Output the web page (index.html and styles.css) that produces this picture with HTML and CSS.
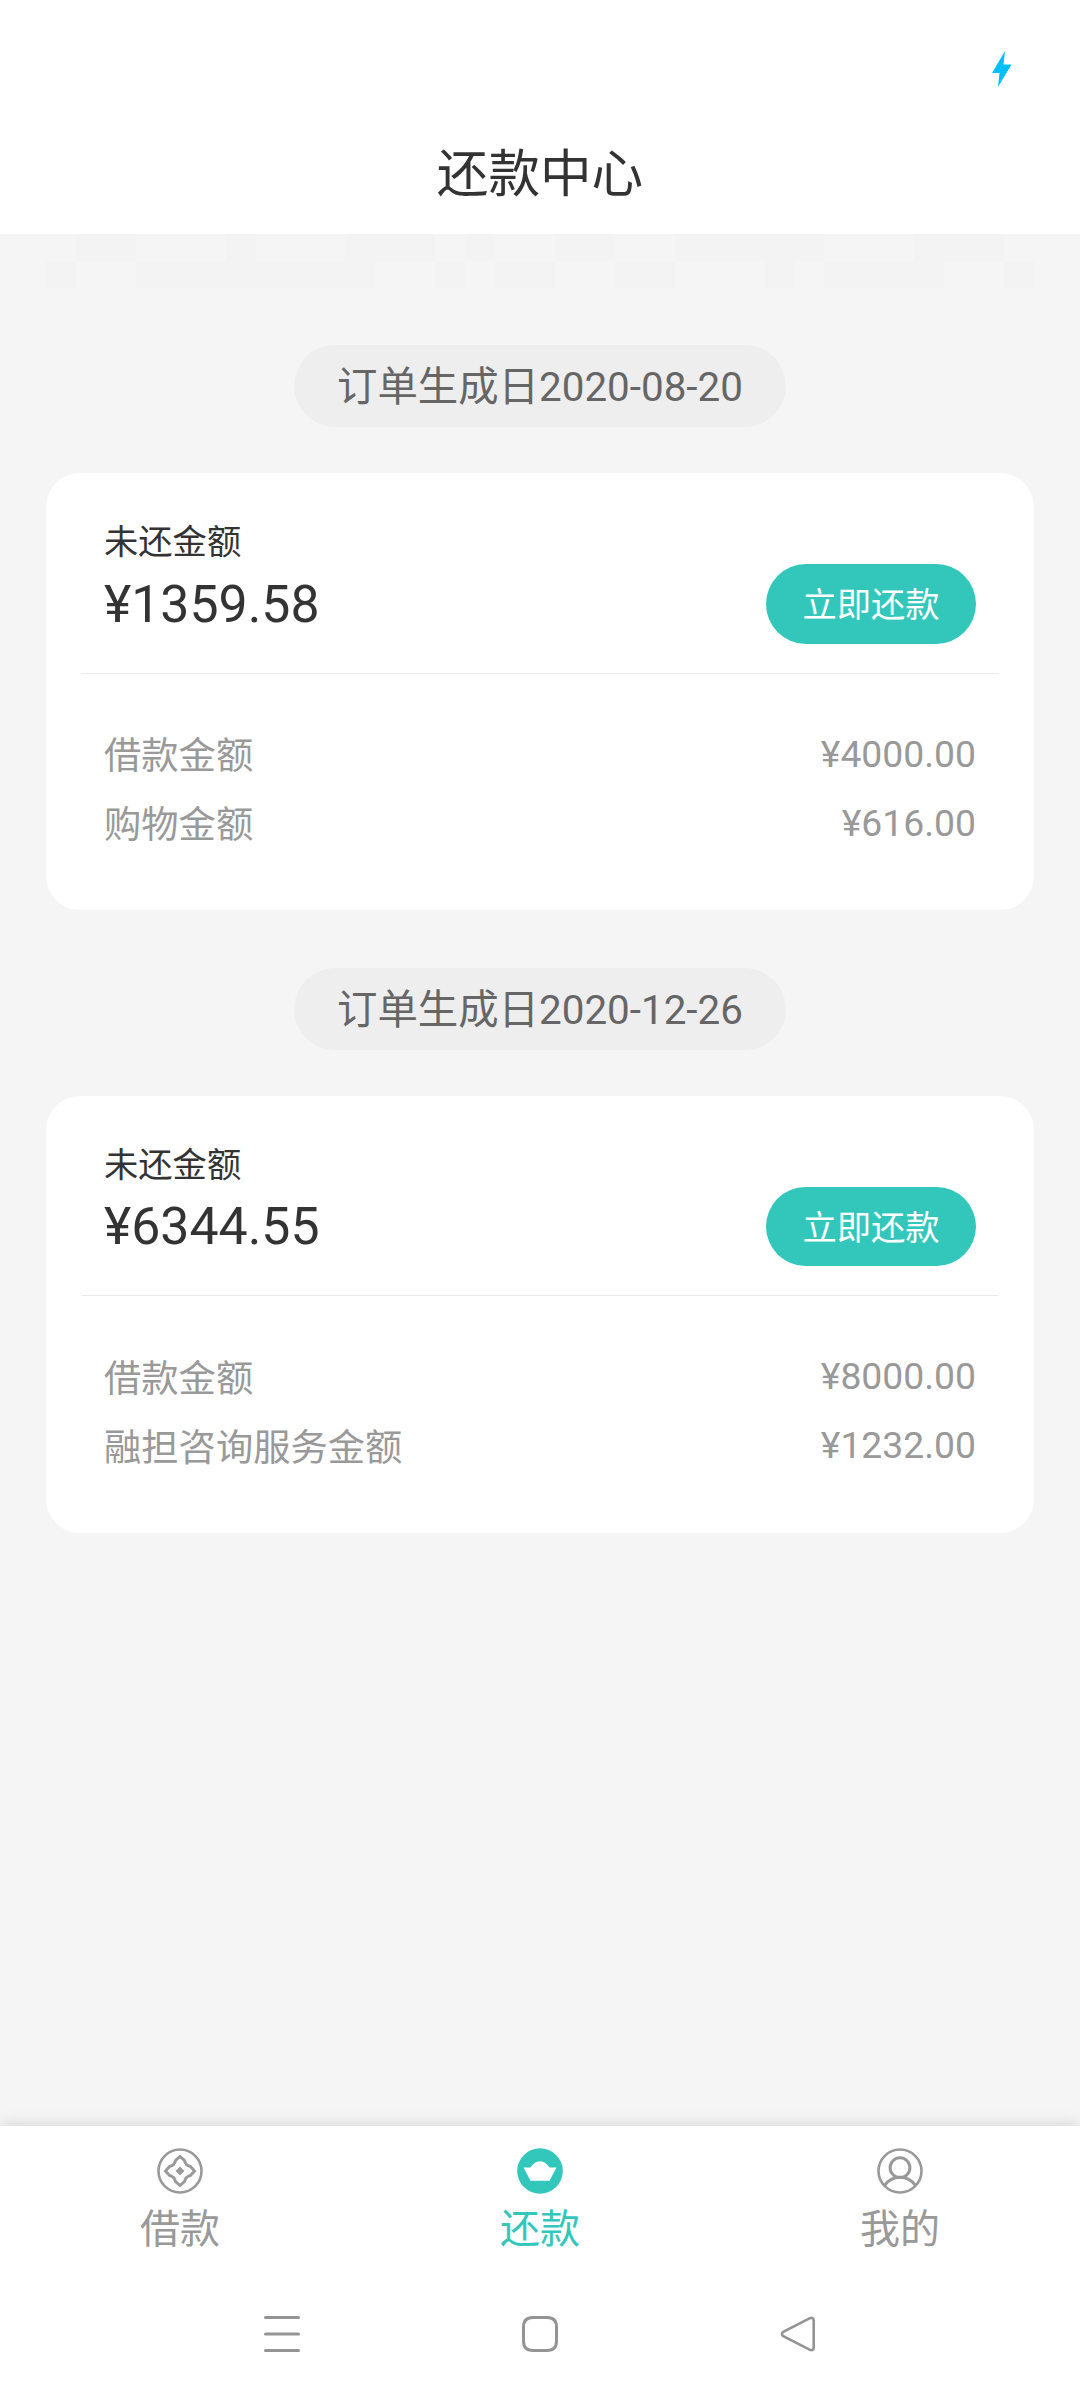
FILE: index.html
```html
<!DOCTYPE html>
<html lang="zh-CN">
<head>
<meta charset="utf-8">
<title>还款中心</title>
<link rel="stylesheet" href="styles.css">
</head>
<body>
<div class="app">
  <header class="header">
    <div class="status">
      <svg class="bolt" width="20" height="36" viewBox="0 0 20 36"><path d="M13 0L0 22H7.500L6 36L19.500 13.500H11.500Z" fill="#00bfff"/></svg>
    </div>
    <h1 class="title">还款中心</h1>
  </header>

  <main class="content">
    <svg class="mosaic" width="988" height="54" viewBox="0 0 33 2" preserveAspectRatio="none" shape-rendering="crispEdges">
      <path fill="#f3f3f3" d="M1 0h2v1h-2zM6 0h1v1h-1zM10 0h3v1h-3zM14 0h1v1h-1zM17 0h2v1h-2zM21 0h5v1h-5zM29 0h3v1h-3zM0 1h1v1h-1zM3 1h8v1h-8zM13 1h1v1h-1zM15 1h2v1h-2zM19 1h2v1h-2zM24 1h1v1h-1zM26 1h4v1h-4zM32 1h1v1h-1z"/>
    </svg>

    <section class="order">
      <div class="date">订单生成日2020-08-20</div>
      <div class="card">
        <div class="summary">
          <div class="due">
            <div class="due-label">未还金额</div>
            <div class="due-amount">¥1359.58</div>
          </div>
          <button class="pay">立即还款</button>
        </div>
        <div class="details">
          <div class="row"><span class="label">借款金额</span><span class="value">¥4000.00</span></div>
          <div class="row"><span class="label">购物金额</span><span class="value">¥616.00</span></div>
        </div>
      </div>
    </section>

    <section class="order">
      <div class="date">订单生成日2020-12-26</div>
      <div class="card">
        <div class="summary">
          <div class="due">
            <div class="due-label">未还金额</div>
            <div class="due-amount">¥6344.55</div>
          </div>
          <button class="pay">立即还款</button>
        </div>
        <div class="details">
          <div class="row"><span class="label">借款金额</span><span class="value">¥8000.00</span></div>
          <div class="row"><span class="label">融担咨询服务金额</span><span class="value">¥1232.00</span></div>
        </div>
      </div>
    </section>
  </main>

  <nav class="tabs">
    <a class="tab">
      <svg width="46" height="46" viewBox="0 0 46 46" fill="none" stroke="#999"><circle cx="23" cy="23" r="21.500" stroke-width="2.600"/><path d="M23 8.500L27.500 12.500Q28.500 17.500 33.500 18.500L37.500 23L33.500 27.500Q28.500 28.500 27.500 33.500L23 37.500L18.500 33.500Q17.500 28.500 12.500 27.500L8.500 23L12.500 18.500Q17.500 17.500 18.500 12.500Z" stroke-width="3"/><path d="M23 18.500L27.500 23L23 27.500L18.500 23Z" fill="#999" stroke="none"/></svg>
      <span>借款</span>
    </a>
    <a class="tab active">
      <svg width="46" height="46" viewBox="0 0 46 46"><circle cx="23" cy="23" r="22.800" fill="#33c7bb"/><path d="M6.500 19.500H13.500C16 15.500 19 13.200 23 13.200S30 15.500 32.500 19.500H39.500L32.500 32.700H13.500Z" fill="#fff"/></svg>
      <span>还款</span>
    </a>
    <a class="tab">
      <svg width="46" height="46" viewBox="0 0 46 46" fill="none" stroke="#999"><circle cx="23" cy="23" r="21.500" stroke-width="2.600"/><circle cx="23" cy="19.700" r="9.900" stroke-width="3"/><path d="M7.500 37.500C11.500 32 17 29.300 23 29.300S34.500 32 38.500 37.500" stroke-width="3"/></svg>
      <span>我的</span>
    </a>
  </nav>

  <footer class="sysnav">
    <svg width="36" height="36" viewBox="0 0 36 36" fill="none" stroke="#949494" stroke-width="3" stroke-linecap="round"><path d="M1.500 1.500H34.500M1.500 18H34.500M1.500 34.500H34.500"/></svg>
    <svg width="36" height="36" viewBox="0 0 36 36" fill="none" stroke="#949494" stroke-width="3"><path d="M11 1.500H25Q34.500 1.500 34.500 11V25Q34.500 34.500 25 34.500H11Q1.500 34.500 1.500 25V11Q1.500 1.500 11 1.500Z"/></svg>
    <svg width="36" height="36" viewBox="0 0 36 36" fill="none" stroke="#949494" stroke-width="2.600"><path d="M29.500 2.400L3.300 15.800Q0.500 18 3.300 20.200L29.500 33.600Q33.700 35.200 33.700 31.500V4.500Q33.700 0.800 29.500 2.400Z"/></svg>
  </footer>
</div>
</body>
</html>
```
FILE: styles.css
```css
* { box-sizing: border-box; }

body {
  margin: 0;
  background: #f5f5f5;
  color: #333;
  font-family: Roboto, "Noto Sans CJK SC", sans-serif;
}

svg { display: block; }

.app {
  width: 1080px;
  height: 2400px;
  display: flex;
  flex-direction: column;
  overflow: hidden;
}

.header {
  height: 234px;
  background: #fff;
}

.status {
  height: 137px;
  padding: 51px 68px 0 0;
  display: flex;
  justify-content: flex-end;
}

.title {
  margin: 0;
  font-size: 51.6px;
  font-weight: 400;
  line-height: 75px;
  text-align: center;
}

.content {
  flex: 1;
  padding: 0 46px;
  display: flex;
  flex-direction: column;
}

.mosaic { margin-bottom: 57px; }

.order {
  display: flex;
  flex-direction: column;
  align-items: center;
  margin-bottom: 58px;
}

.date {
  width: 492px;
  height: 82px;
  border-radius: 41px;
  background: #eee;
  color: #666;
  font-size: 40.4px;
  line-height: 86px;
  text-align: center;
}

.card {
  width: 988px;
  height: 437px;
  margin-top: 46px;
  padding: 0 35px;
  border-radius: 34px;
  background: #fff;
}

.summary {
  height: 201px;
  padding: 46px 23px 0;
  border-bottom: 1px solid #ebebeb;
  display: flex;
  justify-content: space-between;
}

.due-label {
  font-size: 34.3px;
  line-height: 46px;
}

.due-amount {
  font-size: 51.8px;
  line-height: 79px;
}

.pay {
  width: 210px;
  height: 80px;
  margin-top: 45px;
  padding: 2px 0 0;
  border: 0;
  border-radius: 40px;
  background: #33c7bb;
  color: #fff;
  font: inherit;
  font-size: 34.3px;
  line-height: 78px;
}

.details {
  padding: 46px 23px 0;
  color: #999;
  font-size: 37.3px;
}

.row {
  height: 69px;
  line-height: 69px;
  display: flex;
  justify-content: space-between;
}

.label { line-height: 73px; }

.order + .order .summary { height: 200px; }
.order + .order .due-amount { line-height: 77px; }
.order + .order .pay { height: 79px; }
.order + .order .label { line-height: 75px; }

.tabs {
  height: 144px;
  padding-top: 22px;
  background: #fff;
  box-shadow: 0 0 16px rgba(0, 0, 0, 0.16);
  display: flex;
}

.tab {
  flex: 1;
  display: flex;
  flex-direction: column;
  align-items: center;
  color: #999;
  font-size: 40px;
  line-height: 71px;
}

.active { color: #33c7bb; }

.sysnav {
  position: relative;
  height: 130px;
  padding: 46px 264px 0;
  background: #fff;
  display: flex;
  justify-content: space-between;
}
```
